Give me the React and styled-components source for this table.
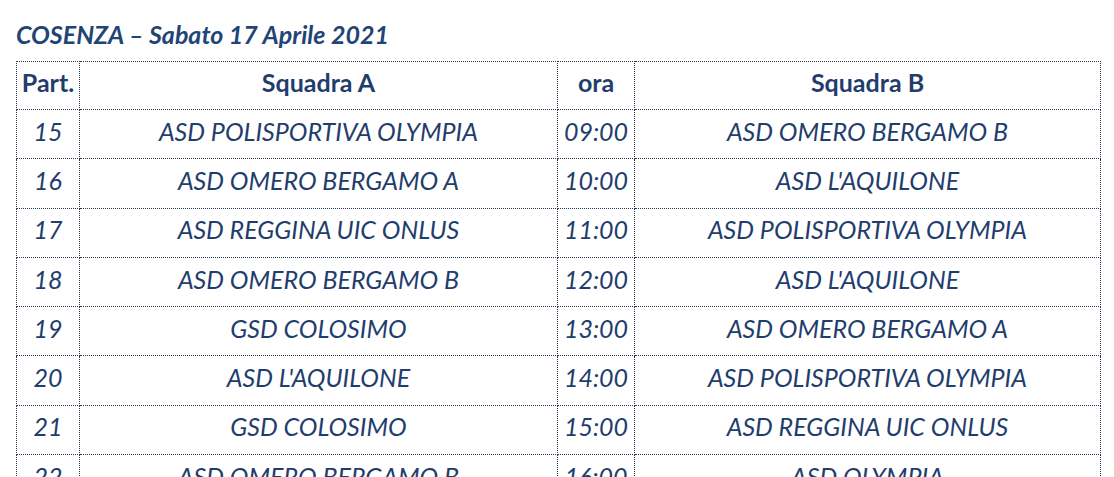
import React from "react"
import styled, { createGlobalStyle } from "styled-components"

const GlobalStyle = createGlobalStyle`
  html, body {
    margin: 0;
    padding: 0;
    background: #ffffff;
  }
  body {
    font-family: Lato, "Open Sans", "Liberation Sans", sans-serif;
    color: #1f3d6d;
  }
`

const Page = styled.div`
  padding: 19px 14px 0 16px;
  width: 1084px;
`

const Title = styled.h2`
  margin: 0 0 12px 0;
  font-size: 25px;
  line-height: 30px;
  font-weight: 700;
  font-style: italic;
  color: #1f4577;
  letter-spacing: 0;
`

const Table = styled.table`
  width: 1085px;
  border-collapse: collapse;
  table-layout: fixed;
`

const Cell = styled.td`
  border: 1px dotted #2c3852;
  height: ${p => (p.$head ? "40px" : "41.3px")};
  padding: 0 0 7px 0;
  text-align: center;
  vertical-align: middle;
  font-size: 25px;
  line-height: 30px;
  font-weight: ${p => (p.$head ? 700 : 400)};
  font-style: ${p => (p.$head ? "normal" : "italic")};
  color: #1f3d6d;
  white-space: nowrap;
`

const matches = [
  ["15", "ASD POLISPORTIVA OLYMPIA", "09:00", "ASD OMERO BERGAMO B"],
  ["16", "ASD OMERO BERGAMO A", "10:00", "ASD L'AQUILONE"],
  ["17", "ASD REGGINA UIC ONLUS", "11:00", "ASD POLISPORTIVA OLYMPIA"],
  ["18", "ASD OMERO BERGAMO B", "12:00", "ASD L'AQUILONE"],
  ["19", "GSD COLOSIMO", "13:00", "ASD OMERO BERGAMO A"],
  ["20", "ASD L'AQUILONE", "14:00", "ASD POLISPORTIVA OLYMPIA"],
  ["21", "GSD COLOSIMO", "15:00", "ASD REGGINA UIC ONLUS"],
  ["22", "ASD OMERO BERGAMO B", "16:00", "ASD OLYMPIA"],
]

const App = () => {
  return (
    <Page>
      <GlobalStyle />
      <Title>COSENZA – Sabato 17 Aprile 2021</Title>
      <Table>
        <colgroup>
          <col style={{ width: 63 }} />
          <col style={{ width: 478 }} />
          <col style={{ width: 77 }} />
          <col style={{ width: 466 }} />
        </colgroup>
        <thead>
          <tr>
            <Cell as="th" $head>Part.</Cell>
            <Cell as="th" $head>Squadra A</Cell>
            <Cell as="th" $head>ora</Cell>
            <Cell as="th" $head>Squadra B</Cell>
          </tr>
        </thead>
        <tbody>
          {matches.map(m => (
            <tr key={m[0]}>
              {m.map((v, i) => (
                <Cell key={i}>{v}</Cell>
              ))}
            </tr>
          ))}
        </tbody>
      </Table>
    </Page>
  )
}

export default App
